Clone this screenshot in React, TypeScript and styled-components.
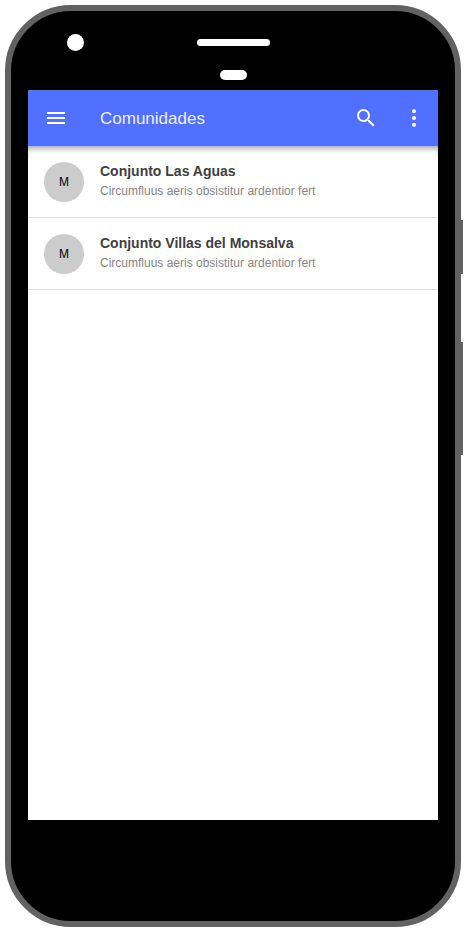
import React from 'react';
import styled, { createGlobalStyle } from 'styled-components';

const GlobalStyle = createGlobalStyle`
  *, *::before, *::after { box-sizing: border-box; }
  body {
    margin: 0;
    background: #fff;
    font-family: 'Liberation Sans', Arial, sans-serif;
  }
`;

const Stage = styled.main`
  width: 466px;
  height: 932px;
  padding: 5px;
  overflow: hidden;
`;

const Phone = styled.div`
  position: relative;
  display: flex;
  flex-direction: column;
  width: 456px;
  height: 922px;
  padding: 0 17px;
  background: #000;
  border: 6px solid #626262;
  border-radius: 66px;
`;

const SideButton = styled.span<{ $top: number; $height: number }>`
  position: absolute;
  top: ${(p) => p.$top}px;
  right: -8px;
  width: 2px;
  height: ${(p) => p.$height}px;
  background: #626262;
`;

const Bezel = styled.div`
  display: grid;
  grid-template-columns: 1fr;
  grid-template-rows: 17px 10px;
  row-gap: 19px;
  align-items: center;
  height: 79px;
  padding: 23px 0 10px;
  flex: none;
`;

const Camera = styled.span`
  grid-column: 1;
  grid-row: 1;
  width: 17px;
  height: 17px;
  margin-left: 39px;
  border-radius: 50%;
  background: #fff;
`;

const Slot = styled.span<{ $width: number; $height: number; $row: number }>`
  grid-column: 1;
  grid-row: ${(p) => p.$row};
  justify-self: center;
  width: ${(p) => p.$width}px;
  height: ${(p) => p.$height}px;
  margin-left: 1px;
  border-radius: 5px;
  background: #fff;
`;

const Screen = styled.div`
  width: 410px;
  height: 730px;
  background: #fff;
  overflow: hidden;
`;

const Toolbar = styled.header`
  position: relative;
  display: flex;
  align-items: center;
  height: 56px;
  padding: 0 4px 0 8px;
  color: #fff;
  background: #5170ff;

  &::after {
    content: '';
    position: absolute;
    top: 100%;
    left: 0;
    right: 0;
    height: 12px;
    box-shadow: inset 0 5px 6px -3px rgba(0, 0, 0, 0.4);
    pointer-events: none;
  }
`;

const IconButton = styled.button`
  display: flex;
  align-items: center;
  justify-content: center;
  width: 40px;
  height: 40px;
  padding: 0;
  border: 0;
  color: inherit;
  background: transparent;
`;

const Title = styled.h1`
  flex: 1;
  margin: 0 0 0 24px;
  padding-top: 2px;
  font-size: 17px;
  font-weight: 400;
  line-height: 24px;
  color: rgba(255, 255, 255, 0.92);
`;

const Actions = styled.div`
  display: flex;
  gap: 8px;
`;

const List = styled.ul`
  margin: 0;
  padding: 0;
  list-style: none;
`;

const Row = styled.li`
  display: flex;
  align-items: center;
  gap: 16px;
  height: 72px;
  padding: 0 16px;
  border-bottom: 1px solid #e0e0e0;
`;

const Avatar = styled.span`
  display: flex;
  align-items: center;
  justify-content: center;
  width: 40px;
  height: 40px;
  border-radius: 50%;
  background: #ccc;
  color: #000;
  font-size: 12px;
`;

const Texts = styled.div`
  display: flex;
  flex-direction: column;
  padding-bottom: 2px;
`;

const Name = styled.strong`
  font-size: 14px;
  line-height: 20px;
  color: #404040;
`;

const Detail = styled.span`
  font-size: 12px;
  line-height: 20px;
  color: #868686;
`;

const Icon = ({ children }: { children: React.ReactNode }) => (
  <svg width="24" height="24" viewBox="0 0 24 24" fill="currentColor" aria-hidden="true">
    {children}
  </svg>
);

const communities = [
  { initial: 'M', name: 'Conjunto Las Aguas', detail: 'Circumfluus aeris obsistitur ardentior fert' },
  { initial: 'M', name: 'Conjunto Villas del Monsalva', detail: 'Circumfluus aeris obsistitur ardentior fert' },
];

export default function App() {
  return (
    <>
      <GlobalStyle />
      <Stage>
        <Phone>
          <SideButton $top={209} $height={54} />
          <SideButton $top={331} $height={113} />
          <Bezel>
            <Camera />
            <Slot $width={73} $height={7} $row={1} />
            <Slot $width={27} $height={10} $row={2} />
          </Bezel>
          <Screen>
            <Toolbar>
              <IconButton aria-label="Menu">
                <Icon>
                  <path d="M3 18h18v-2H3v2zm0-5h18v-2H3v2zm0-7v2h18V6H3z" />
                </Icon>
              </IconButton>
              <Title>Comunidades</Title>
              <Actions>
                <IconButton aria-label="Buscar">
                  <Icon>
                    <path d="M15.5 14h-.79l-.28-.27A6.471 6.471 0 0 0 16 9.5 6.5 6.5 0 1 0 9.5 16c1.61 0 3.09-.59 4.23-1.57l.27.28v.79l5 4.99L20.49 19l-4.99-5zm-6 0C7.01 14 5 11.99 5 9.5S7.01 5 9.5 5 14 7.01 14 9.5 11.99 14 9.5 14z" />
                  </Icon>
                </IconButton>
                <IconButton aria-label="Más opciones">
                  <Icon>
                    <circle cx="12" cy="5.33" r="2" />
                    <circle cx="12" cy="12" r="2" />
                    <circle cx="12" cy="18.67" r="2" />
                  </Icon>
                </IconButton>
              </Actions>
            </Toolbar>
            <List>
              {communities.map((c) => (
                <Row key={c.name}>
                  <Avatar>{c.initial}</Avatar>
                  <Texts>
                    <Name>{c.name}</Name>
                    <Detail>{c.detail}</Detail>
                  </Texts>
                </Row>
              ))}
            </List>
          </Screen>
        </Phone>
      </Stage>
    </>
  );
}
